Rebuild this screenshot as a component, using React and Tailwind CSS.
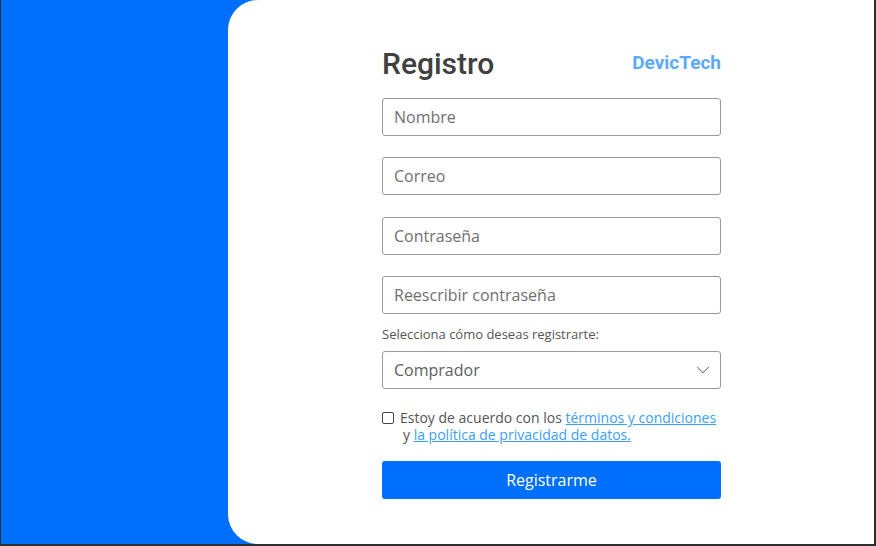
import { ChevronDown } from "lucide-react";

const inputCls =
  "w-full h-[38px] border border-[#9a9a9a] rounded-[3px] px-[11px] text-[16px] text-[#333] placeholder:text-[#707070] outline-none bg-white";

export default function App() {
  return (
    <div
      className="w-[876px] h-[546px] bg-[#006ffb] border-l border-r-2 border-b-2 border-[#2e2e2e] flex overflow-hidden"
      style={{ fontFamily: "'Open Sans', sans-serif" }}
    >
      <div className="w-[227px] shrink-0" />
      <div className="flex-1 bg-white rounded-l-[30px] pl-[154px] pt-[44px]">
        <div className="w-[339px] flex flex-col">
          {/* header */}
          <div className="flex items-center justify-between h-[38px]">
            <h1 className="text-[30px] font-medium text-[#404040]" style={{ fontFamily: "Roboto, sans-serif" }}>
              Registro
            </h1>
            <span className="text-[19px] font-bold text-[#5aaaf6]" style={{ fontFamily: "Roboto, sans-serif" }}>
              DevicTech
            </span>
          </div>

          <div className="flex flex-col gap-[21.33px] mt-[16px]">
            <input className={inputCls} placeholder="Nombre" />
            <input className={inputCls} placeholder="Correo" />
            <input className={inputCls} type="password" placeholder="Contraseña" />
            <input className={inputCls} type="password" placeholder="Reescribir contraseña" />
          </div>

          <p className="text-[13px] text-[#555] mt-[11px]">Selecciona cómo deseas registrarte:</p>

          <div className="relative mt-[7px]">
            <select className={inputCls + " appearance-none text-[#606060]"} defaultValue="Comprador">
              <option>Comprador</option>
              <option>Vendedor</option>
            </select>
            <ChevronDown className="absolute right-[7px] top-[8px] text-[#666] pointer-events-none" size={22} strokeWidth={1.1} />
          </div>

          <div className="flex items-start gap-[6px] mt-[20px] text-[14px] leading-[17px] text-[#555]">
            <input type="checkbox" className="w-[12px] h-[12px] mt-[3px] border border-[#444] rounded-[2px] appearance-none shrink-0" />
            <div className="flex flex-col">
              <span>
                Estoy de acuerdo con los{" "}
                <a className="text-[#3c9ff5] underline underline-offset-1">términos y condiciones</a>
              </span>
              <span className="pl-[3px]">
                y <a className="text-[#3c9ff5] underline underline-offset-1">la política de privacidad de datos.</a>
              </span>
            </div>
          </div>

          <button className="mt-[18px] h-[38px] w-full bg-[#006ffb] rounded-[3px] text-white text-[16px]">
            Registrarme
          </button>
        </div>
      </div>
    </div>
  );
}
